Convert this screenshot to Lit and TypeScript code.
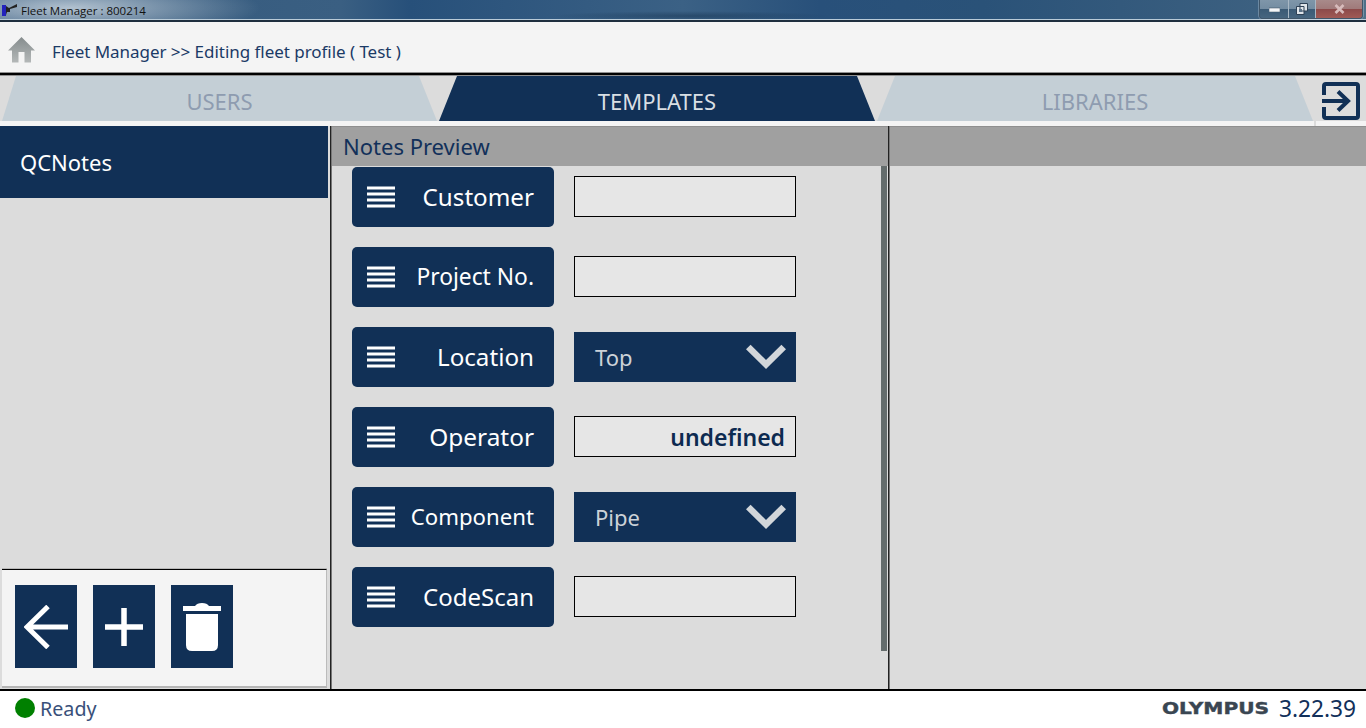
import { LitElement, html, css } from "lit";
import { customElement } from "lit/decorators.js";

const menu = html`<svg class="menu" width="28" height="22" viewBox="0 0 28 22"><path d="M0 2H28M0 8H28M0 14H28M0 20H28" stroke="#fff" stroke-width="3" fill="none"/></svg>`;
const chevron = html`<svg class="chev" width="40" height="26" viewBox="0 0 40 26"><path d="M2.300 3L20 20.500L37.700 3" stroke="#d2d6da" stroke-width="6.500" fill="none"/></svg>`;

type Row = { label: string; size: number; kind: "input" | "select"; value?: string };
const rows: Row[] = [
  { label: "Customer", size: 24.2, kind: "input" },
  { label: "Project No.", size: 22.8, kind: "input" },
  { label: "Location", size: 24.2, kind: "select", value: "Top" },
  { label: "Operator", size: 24.4, kind: "input", value: "undefined" },
  { label: "Component", size: 22.2, kind: "select", value: "Pipe" },
  { label: "CodeScan", size: 24, kind: "input" },
];

@customElement("app-root")
export class AppRoot extends LitElement {
  static styles = css`
    :host { display: block; width: 1366px; height: 728px; overflow: hidden; font-family: "Noto Sans", sans-serif; background: #fff; color: #12305a; }
    .app { display: flex; flex-direction: column; height: 728px; }
    .titlebar { height: 20px; display: flex; align-items: center; justify-content: space-between; flex: none; border-bottom: 2px solid #1f2f3f; box-shadow: inset 0 -1px 0 #b9cbd8;
      background:
        radial-gradient(ellipse 190px 30px at 70px 8px, rgba(200,212,222,.85), rgba(200,212,222,0) 100%),
        radial-gradient(ellipse 140px 5px at 690px 16px, rgba(25,55,85,.55), rgba(25,55,85,0) 100%),
        linear-gradient(90deg, #33587c 0%, #3a5f82 25%, #27507a 30%, #3b6185 50%, #28507a 60%, #2a5278 72%, #3c6080 92%, #4e7088 100%); }
    .wintitle { display: flex; align-items: center; gap: 4px; padding-left: 1px; font-size: 11.5px; color: #111; font-family: "Open Sans", sans-serif; }
    .winbtns { display: flex; margin-right: 3px; height: 18px; align-self: flex-start; border: 1px solid #40566a; border-top: 0; border-radius: 0 0 4px 4px; overflow: hidden; box-shadow: 0 0 0 1px rgba(220,230,240,.3); }
    .winbtn { height: 18px; display: flex; align-items: center; justify-content: center; background: linear-gradient(#7f96a9 0%, #748da2 48%, #3b5a75 52%, #46657f 100%); border-right: 1px solid #a9b8c5; }
    .winbtn.min { width: 28px; }
    .winbtn.max { width: 26px; }
    .winbtn.close { width: 46px; border-right: 0; background: linear-gradient(#a88a8a 0%, #a07a7a 48%, #8c4a4a 52%, #a05a55 100%); }
    .header { height: 51px; flex: none; display: flex; align-items: center; gap: 17px; padding: 5px 0 0 8px; background: #f4f4f4; border-bottom: 1px solid #8f8f8f; font-size: 17px; letter-spacing: -.04px; color: #1b3a66; box-sizing: border-box; }
    .crumb { margin-top: 4px; }
    .topline { height: 2px; background: #000; flex: none; }
    .tabs { height: 46px; flex: none; display: flex; gap: 2px; padding-left: 2px; background: #dcdcdc; border-top: 1px solid #8f8f8f; box-sizing: border-box; }
    .tab { width: 436px; height: 45px; display: flex; align-items: center; justify-content: center; font-size: 22px; padding-top: 4px; box-sizing: border-box; clip-path: polygon(18px 0, calc(100% - 18px) 0, 100% 100%, 0 100%); background: #c4cfd6; color: #8e9cb0; }
    .tab.first { width: 435px; clip-path: polygon(14px 0, calc(100% - 18px) 0, 100% 100%, 0 100%); }
    .tab.on { background: #113056; color: #d9dfe4; }
    .exit { margin: 6px 0 0 7px; flex: none; }
    .strip { height: 5px; flex: none; background: linear-gradient(90deg, #f4f4f4 1314px, #dcdcdc 1314px, #dcdcdc 1316px, #f4f4f4 1316px); }
    .main { flex: 1; min-height: 0; display: flex; background: #dcdcdc; }
    .left { width: 330px; flex: none; display: flex; flex-direction: column; }
    .qc { width: 328px; height: 72px; flex: none; background: #113056; color: #fff; font-size: 22px; display: flex; align-items: center; padding-left: 20px; box-sizing: border-box; }
    .grow { flex: 1; }
    .foot { margin: 0 0 1px 2px; width: 325px; height: 119px; box-sizing: border-box; flex: none; background: #f4f4f4; border-top: 1px solid #000; border-right: 1px solid #bbb; border-bottom: 2px solid #b5b5b5; box-shadow: 0 -1px 0 #b8b8b8; padding: 15px 0 0 13px; display: flex; gap: 16px; align-items: flex-start; }
    .action { width: 62px; height: 83px; background: #113056; display: flex; align-items: center; justify-content: center; }
    .sep { width: 2px; flex: none; background: linear-gradient(90deg, #222 50%, #777 50%); }
    .mid { width: 556px; flex: none; display: flex; flex-direction: column; border-top: 1px solid #8f8f8f; }
    .phead { height: 39px; flex: none; background: #a0a0a0; color: #12305a; font-size: 22px; display: flex; align-items: center; padding: 0 0 2px 11px; box-sizing: border-box; }
    .body { flex: 1; display: flex; justify-content: space-between; align-items: flex-start; }
    .rows { padding: 1px 0 0 20px; display: flex; flex-direction: column; gap: 20px; }
    .row { display: flex; align-items: center; gap: 20px; height: 60px; }
    .btn { width: 202px; height: 60px; border-radius: 5px; background: #113056; color: #fff; display: flex; align-items: center; justify-content: space-between; padding: 0 20px 0 15px; box-sizing: border-box; }
    .btn span { margin-top: -1px; }
    .menu { flex: none; }
    .input { width: 222px; height: 41px; margin-bottom: 1px; box-sizing: border-box; background: #e6e6e6; border: 1px solid #000; font-size: 23px; font-weight: 600; color: #0d2a50; display: flex; align-items: center; justify-content: flex-end; padding-right: 10px; }
    .select { width: 222px; height: 50px; box-sizing: border-box; background: #113056; color: #ccd2d8; font-size: 22px; display: flex; align-items: center; justify-content: space-between; padding: 0 10px 0 21px; }
    .scroll { width: 6px; height: 485px; background: #646c6c; margin-right: 1px; flex: none; }
    .right { flex: 1; border-top: 1px solid #8f8f8f; }
    .rhead { height: 39px; background: #a0a0a0; }
    .status { height: 39px; flex: none; display: flex; align-items: center; background: #fff; border-top: 2px solid #000; box-sizing: border-box; padding: 0 10px 3px 15px; color: #39507a; font-size: 19.7px; }
    .dot { width: 20px; height: 20px; border-radius: 50%; background: #008000; margin-right: 5px; }
    .logo { margin-left: auto; font-family: "DejaVu Sans", sans-serif; font-weight: 700; font-size: 16px; color: #3a4652; -webkit-text-stroke: .4px #3a4652; display: inline-block; transform: scaleX(1.26); transform-origin: right center; margin-right: 10px; }
    .ver { color: #12305a; font-size: 22.7px; }
  `;

  render() {
    return html`<div class="app">
      <div class="titlebar">
        <div class="wintitle">
          <svg width="16" height="14" viewBox="0 0 16 14"><path d="M1 2H5V13H1Z" fill="#2222bb"/><path d="M5 3L8 5L16 1V4L9 6L9 9L6 9L5 12Z" fill="#222"/></svg>
          <span>Fleet Manager : 800214</span>
        </div>
        <div class="winbtns">
          <div class="winbtn min"><svg width="11" height="5"><rect width="11" height="4" y="1" fill="#f4f6f8" stroke="#35485a" stroke-width=".5"/></svg></div>
          <div class="winbtn max"><svg width="12" height="12" viewBox="0 0 12 12"><path d="M4 .5H11.5V8H4Z M.5 3.5H8V11.5H.5Z" fill="#dfe5ea" stroke="#2e4155"/><rect x="3" y="6" width="3" height="3" fill="#5a7288"/></svg></div>
          <div class="winbtn close"><svg width="11" height="10" viewBox="0 0 11 10"><path d="M1.500 1L9.500 9M9.500 1L1.500 9" stroke="#d8bcbc" stroke-width="2.600"/></svg></div>
        </div>
      </div>
      <div class="header">
        <svg width="27" height="26" viewBox="0 0 27 26"><defs><linearGradient id="hg" x1="0" y1="0" x2="0" y2="1"><stop offset="0" stop-color="#858c8d"/><stop offset="1" stop-color="#b4b8b8"/></linearGradient></defs><path d="M13.500 0L0 13.500H4V25.500H10.500V15H16.500V25.500H23V13.500H27Z" fill="url(#hg)"/></svg>
        <span class="crumb">Fleet Manager &gt;&gt; Editing fleet profile ( Test )</span>
      </div>
      <div class="topline"></div>
      <div class="tabs">
        <div class="tab first">USERS</div>
        <div class="tab on">TEMPLATES</div>
        <div class="tab">LIBRARIES</div>
        <svg class="exit" width="38" height="38" viewBox="0 0 38 38"><path d="M2 13V4Q2 2 4 2H34Q36 2 36 4V34Q36 36 34 36H4Q2 36 2 34V25" fill="none" stroke="#113056" stroke-width="4"/><path d="M0 19H26M16 9.500L26 19L16 28.500" fill="none" stroke="#113056" stroke-width="4"/></svg>
      </div>
      <div class="strip"></div>
      <div class="main">
        <div class="left">
          <div class="qc">QCNotes</div>
          <div class="grow"></div>
          <div class="foot">
            <div class="action"><svg width="44" height="44" viewBox="0 0 44 44"><path d="M44 22H3M24 1.500L3 22L24 42.500" fill="none" stroke="#fff" stroke-width="5"/></svg></div>
            <div class="action"><svg width="38" height="38" viewBox="0 0 38 38"><path d="M0 19H38M19 0V38" fill="none" stroke="#fff" stroke-width="5.500"/></svg></div>
            <div class="action"><svg width="38" height="48" viewBox="0 0 38 48"><path d="M0 3H12Q14 0 19 0Q24 0 26 3H38V8H0Z" fill="#fff"/><path d="M3 11H35V42Q35 48 29 48H9Q3 48 3 42Z" fill="#fff"/></svg></div>
          </div>
        </div>
        <div class="sep"></div>
        <div class="mid">
          <div class="phead">Notes Preview</div>
          <div class="body">
            <div class="rows">
              ${rows.map(r => html`<div class="row">
                <div class="btn">${menu}<span style="font-size:${r.size}px">${r.label}</span></div>
                ${r.kind === "input"
                  ? html`<div class="input">${r.value ?? ""}</div>`
                  : html`<div class="select"><span>${r.value}</span>${chevron}</div>`}
              </div>`)}
            </div>
            <div class="scroll"></div>
          </div>
        </div>
        <div class="sep"></div>
        <div class="right"><div class="rhead"></div></div>
      </div>
      <div class="status">
        <div class="dot"></div><span>Ready</span>
        <span class="logo">OLYMPUS</span><span class="ver">3.22.39</span>
      </div>
    </div>`;
  }
}
